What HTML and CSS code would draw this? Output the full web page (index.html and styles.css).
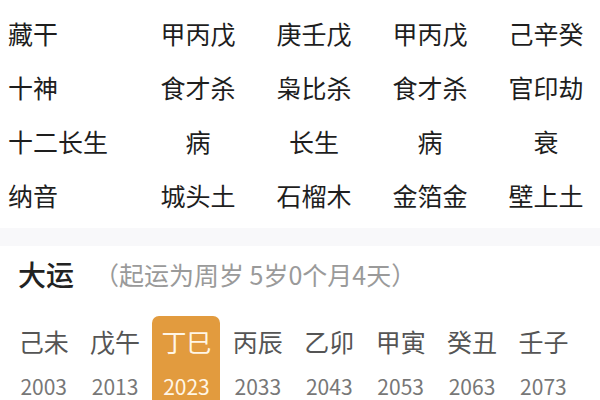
FILE: index.html
```html
<!DOCTYPE html>
<html lang="zh">
<head>
<meta charset="utf-8">
<link rel="stylesheet" href="styles.css">
</head>
<body>
<div class="page">
  <div class="table">
    <div class="label">藏干</div><div class="cell">甲丙戊</div><div class="cell">庚壬戊</div><div class="cell">甲丙戊</div><div class="cell">己辛癸</div>
    <div class="label">十神</div><div class="cell">食才杀</div><div class="cell">枭比杀</div><div class="cell">食才杀</div><div class="cell">官印劫</div>
    <div class="label">十二长生</div><div class="cell">病</div><div class="cell">长生</div><div class="cell">病</div><div class="cell">衰</div>
    <div class="label">纳音</div><div class="cell">城头土</div><div class="cell">石榴木</div><div class="cell">金箔金</div><div class="cell">壁上土</div>
  </div>
  <div class="sep"></div>
  <div class="dayun">
    <div class="head"><span class="title">大运</span><span class="sub">（起运为周岁 5岁0个月4天）</span></div>
    <div class="list">
      <div class="item"><div class="gz">己未</div><div class="yr">2003</div></div>
      <div class="item"><div class="gz">戊午</div><div class="yr">2013</div></div>
      <div class="item active"><div class="gz">丁巳</div><div class="yr">2023</div></div>
      <div class="item"><div class="gz">丙辰</div><div class="yr">2033</div></div>
      <div class="item"><div class="gz">乙卯</div><div class="yr">2043</div></div>
      <div class="item"><div class="gz">甲寅</div><div class="yr">2053</div></div>
      <div class="item"><div class="gz">癸丑</div><div class="yr">2063</div></div>
      <div class="item"><div class="gz">壬子</div><div class="yr">2073</div></div>
    </div>
  </div>
</div>
</body>
</html>
```
FILE: styles.css
```css
html, body {
  margin: 0;
  padding: 0;
  background: #fff;
}
body {
  width: 600px;
  height: 400px;
  overflow: hidden;
  font-family: "Noto Sans CJK SC", "Noto Sans", sans-serif;
}
.page {
  width: 600px;
}
.table {
  display: grid;
  grid-template-columns: 140px repeat(4, 116px);
  grid-auto-rows: 54px;
  padding-top: 6px;
  color: #1e1e1e;
  font-size: 25px;
}
.label {
  padding-left: 8px;
  display: flex;
  align-items: center;
  white-space: nowrap;
}
.cell {
  display: flex;
  align-items: center;
  justify-content: center;
  white-space: nowrap;
}
.sep {
  height: 18px;
  margin-top: 6px;
  background: #f8f8fa;
}
.dayun {
  padding-top: 11px;
}
.head {
  display: flex;
  align-items: center;
  padding-left: 18px;
  height: 34px;
}
.title {
  font-size: 28px;
  font-weight: 500;
  color: #222;
}
.sub {
  font-size: 25px;
  color: #9a9a9a;
  margin-left: 20px;
}
.list {
  display: flex;
  padding-left: 8px;
  margin-top: 25px;
}
.item {
  width: 71.4px;
  display: flex;
  flex-direction: column;
  align-items: center;
  flex: none;
}
.gz {
  font-size: 25px;
  color: #555;
  height: 52px;
  display: flex;
  align-items: center;
  justify-content: center;
  width: 68px;
  border-radius: 7px 7px 0 0;
  padding-bottom: 2px;
  box-sizing: border-box;
}
.yr {
  font-size: 21px;
  color: #777;
  height: 40px;
  width: 68px;
  text-align: center;
  line-height: 36px;
}
.active .gz, .active .yr {
  background: #e29b3e;
  color: #fff6e6;
}
```
